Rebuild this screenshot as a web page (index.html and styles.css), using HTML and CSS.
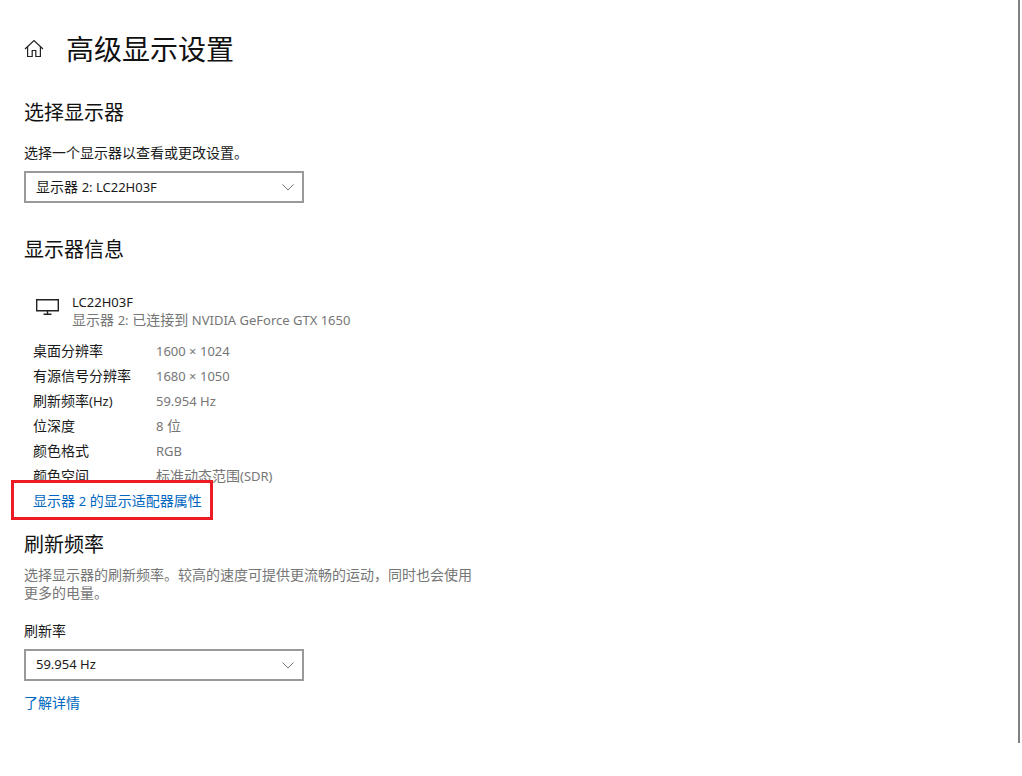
FILE: index.html
```html
<!DOCTYPE html>
<html lang="zh-CN">
<head>
<meta charset="utf-8">
<title>高级显示设置</title>
<link rel="stylesheet" href="styles.css">
</head>
<body>
<main class="page">
  <header class="title-row">
    <svg class="home" width="20" height="20" viewBox="0 0 20 20" fill="none" stroke="#222" stroke-width="1.2"><path d="M1 10 10 1.500 19 10"/><path d="M3.600 7.800v9.700h4.600v-6h3.600v6h4.600V7.800"/></svg>
    <h1>高级显示设置</h1>
  </header>

  <section class="select-section">
    <h2>选择显示器</h2>
    <p class="label">选择一个显示器以查看或更改设置。</p>
    <div class="select"><span class="select-text">显示器 <span class="en">2: LC22H03F</span></span><svg width="12" height="7" viewBox="0 0 12 7" fill="none" stroke="#777" stroke-width="1"><path d="M.4.400 6 6 11.600.400"/></svg></div>
  </section>

  <section class="info-section">
    <h2>显示器信息</h2>
    <div class="monitor">
      <svg class="monitor-icon" width="23" height="20" viewBox="0 0 23 20" fill="none" stroke="#222" stroke-width="1.400"><path d="M.7 2.700h21.600v11H.7z"/><path d="M11.500 13.700v3.500M7.500 17.300h8"/></svg>
      <div class="monitor-text">
        <div class="name en">LC22H03F</div>
        <div class="muted">显示器 <span class="en">2:</span> 已连接到 <span class="en">NVIDIA GeForce GTX 1650</span></div>
      </div>
    </div>
    <dl class="specs">
      <dt>桌面分辨率</dt><dd class="en">1600 × 1024</dd>
      <dt>有源信号分辨率</dt><dd class="en">1680 × 1050</dd>
      <dt>刷新频率<span class="en">(Hz)</span></dt><dd class="en">59.954 Hz</dd>
      <dt>位深度</dt><dd><span class="en">8</span> 位</dd>
      <dt>颜色格式</dt><dd class="en">RGB</dd>
      <dt>颜色空间</dt><dd>标准动态范围<span class="en">(SDR)</span></dd>
    </dl>
    <div class="adapter">
      <a class="link" href="#">显示器 <span class="en">2</span> 的显示适配器属性</a>
      <div class="highlight"></div>
    </div>
  </section>

  <section class="rate-section">
    <h2>刷新频率</h2>
    <p class="desc">选择显示器的刷新频率。较高的速度可提供更流畅的运动，同时也会使用更多的电量。</p>
    <p class="label rate-label">刷新率</p>
    <div class="select"><span class="select-text en">59.954 Hz</span><svg width="12" height="7" viewBox="0 0 12 7" fill="none" stroke="#777" stroke-width="1"><path d="M.4.400 6 6 11.600.400"/></svg></div>
    <a class="link more" href="#">了解详情</a>
  </section>
</main>
<div class="scrollbar"></div>
</body>
</html>
```
FILE: styles.css
```css
* { box-sizing: border-box; }
html, body { margin: 0; height: 100%; background: #fff; overflow: hidden; }
body {
  font-family: "Noto Sans", "Noto Sans CJK SC", sans-serif;
  font-size: 14px;
  color: #1a1a1a;
}
.en { font-size: 13px; }
.page { padding: 27px 0 0 24px; }
.title-row { display: flex; align-items: center; height: 44px; }
.home { margin-left: 0; }
h1 { margin: 0 0 0 22px; font-size: 28px; font-weight: 400; line-height: 44px; color: #111; }
h2 { margin: 0; font-size: 20px; font-weight: 400; line-height: 28px; color: #111; }
p { margin: 0; }
.select-section { margin-top: 28px; }
.label { margin-top: 16px; line-height: 20px; }
.select {
  width: 280px; height: 32px; margin-top: 8px; padding: 0 8px 0 10px;
  border: 2px solid #999; display: flex; align-items: center; justify-content: space-between;
}
.select-text { margin-bottom: 2px; }
.info-section { margin-top: 33px; }
.monitor { display: flex; align-items: flex-start; margin: 29px 0 0 12px; }
.monitor-icon { margin-top: 4px; }
.monitor-text { margin-left: 13px; }
.name { line-height: 18px; }
.muted { line-height: 18px; color: #767676; }
.specs {
  display: grid; grid-template-columns: 123px 1fr; grid-auto-rows: 25px;
  margin: 9px 0 0 9px; align-items: center; line-height: 20px;
}
dd { margin: 0; color: #767676; }
dt { font-weight: 400; }
.adapter { position: relative; margin: 0 0 0 9px; height: 25px; padding-bottom: 2px; display: flex; align-items: center; }
.link { color: #0067c0; text-decoration: none; }
.highlight {
  position: absolute; left: -22px; top: -8px; width: 202px; height: 40px;
  border: 3px solid #ed1c24;
}
.rate-section { margin-top: 18px; }
.desc { width: 452px; margin-top: 7px; line-height: 18px; color: #767676; }
.rate-label { margin-top: 19px; }
.rate-section .select { margin-top: 8px; }
.more { display: block; margin-top: 12px; line-height: 20px; }
.scrollbar { position: absolute; right: 2px; top: 0; width: 2px; height: 743px; background: #808080; }
```
